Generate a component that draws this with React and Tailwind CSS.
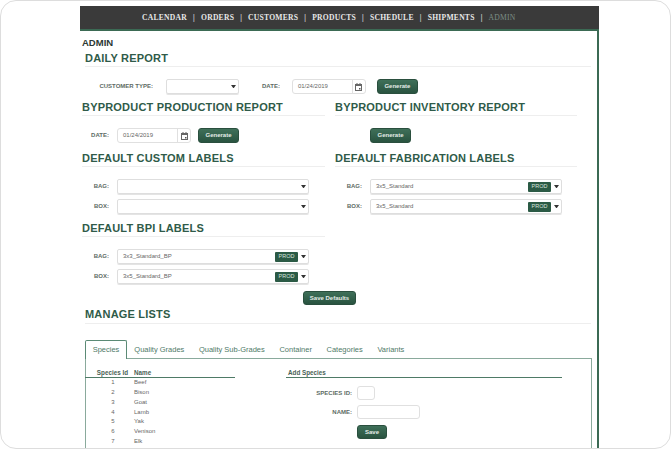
import React from 'react';

const navItems = ['CALENDAR', 'ORDERS', 'CUSTOMERS', 'PRODUCTS', 'SCHEDULE', 'SHIPMENTS'];
const tabs = ['Quality Grades', 'Quality Sub-Grades', 'Container', 'Categories', 'Variants'];
const species = ['Beef', 'Bison', 'Goat', 'Lamb', 'Yak', 'Venison', 'Elk'];

const Caret = () => (
  <svg width="5" height="3.5" viewBox="0 0 6 4" className="shrink-0">
    <polygon points="0,0 6,0 3,4" fill="#333" />
  </svg>
);

const CalendarIcon = () => (
  <svg width="7" height="8" viewBox="0 0 7 8" className="shrink-0">
    <rect x="0.5" y="1.5" width="6" height="6" fill="none" stroke="#666" />
    <rect x="0.5" y="1.5" width="6" height="1.5" fill="#666" />
    <rect x="1.5" y="0" width="1" height="2" fill="#666" />
    <rect x="4.5" y="0" width="1" height="2" fill="#666" />
    <rect x="4" y="5" width="1.5" height="1.5" fill="#555" />
  </svg>
);

const Title = ({ children, className = '' }) => (
  <h2 className={`h-[17px] border-b border-[#eeeeee] text-[11px] leading-[16px] font-bold tracking-[0.2px] text-[#2f5b49] ${className}`}>
    {children}
  </h2>
);

const Label = ({ children, className = '' }) => (
  <span className={`text-[6px] font-bold whitespace-nowrap text-[#5d6b64] ${className}`}>{children}</span>
);

const Button = ({ children, className = '' }) => (
  <button className={`flex items-center justify-center rounded-[3px] border border-[#2a4f3e] bg-gradient-to-b from-[#3f7059] to-[#295340] text-[6px] font-bold whitespace-nowrap text-[#e4ece8] ${className}`}>
    {children}
  </button>
);

const DateInput = ({ className = '' }) => (
  <div className={`flex h-[15px] w-[74px] items-center rounded-[3px] border border-[#e0e0e0] ${className}`}>
    <span className="flex-1 pl-[5px] text-[6px] text-[#666]">01/24/2019</span>
    <span className="flex h-full w-[13px] items-center justify-center border-l border-[#e0e0e0]">
      <CalendarIcon />
    </span>
  </div>
);

const Select = ({ value, prod, className = '' }) => (
  <div className={`flex h-[15px] items-center rounded-[2px] border border-[#dedede] pr-[2px] shadow-[0_1px_0_#e4e4e4] ${className}`}>
    <span className="flex-1 pl-[5px] text-[6px] text-[#666]">{value}</span>
    {prod && (
      <span className="mr-[3px] flex h-[10px] w-[23px] items-center justify-center rounded-[1px] bg-[#2b5a45] text-[5.5px] text-[#d8e4de]">
        PROD
      </span>
    )}
    <Caret />
  </div>
);

const LabelRow = ({ label, value, prod, className = '' }) => (
  <div className={`flex items-center ${className}`}>
    <Label className="w-[27px] text-right">{label}</Label>
    <Select value={value} prod={prod} className="ml-[8px] w-[192px]" />
  </div>
);

const App = () => {
  return (
    <div className="h-[450px] w-[671px] overflow-hidden bg-white font-['Liberation_Sans',sans-serif]">
      <div className="h-[449px] overflow-hidden rounded-[16px] border border-[#dddddd] pl-[79px]">
        <div className="mt-[5px] h-[450px] w-[519px] border-r-2 border-[#3b6a54]">
          <nav className="-mr-[2px] flex h-[25px] items-center gap-[6px] border-b-2 border-[#3b6a54] bg-[#3a3a3a] pl-[62px] font-['Liberation_Serif',serif] text-[7.6px] font-bold tracking-[0.25px] text-[#e8e8e8]">
            {navItems.map((item) => (
              <React.Fragment key={item}>
                <span>{item}</span>
                <span>|</span>
              </React.Fragment>
            ))}
            <span className="font-normal text-[#7c8f85]">ADMIN</span>
          </nav>

          <div className="pl-[2px]">
            <div className="mt-[6px] h-[12px] text-[9.5px] leading-[12px] font-bold text-[#2b3833]">ADMIN</div>

            <Title className="mt-[1px] ml-[3px] w-[506px]">DAILY REPORT</Title>
            <div className="mt-[12px] flex items-center">
              <Label className="w-[71px] text-right">CUSTOMER TYPE:</Label>
              <Select className="ml-[13px] w-[73px]" />
              <Label className="ml-[23px]">DATE:</Label>
              <DateInput className="ml-[12px]" />
              <Button className="ml-[11px] h-[15px] w-[41px]">Generate</Button>
            </div>

            <div className="mt-[5px] grid grid-cols-[243px_242px] gap-x-[10px]">
              <div>
                <Title>BYPRODUCT PRODUCTION REPORT</Title>
                <div className="mt-[12px] flex items-center">
                  <Label className="w-[27px] text-right">DATE:</Label>
                  <DateInput className="ml-[8px]" />
                  <Button className="ml-[7px] h-[15px] w-[41px]">Generate</Button>
                </div>
              </div>
              <div>
                <Title>BYPRODUCT INVENTORY REPORT</Title>
                <Button className="mt-[12px] ml-[35px] h-[15px] w-[41px]">Generate</Button>
              </div>

              <div className="mt-[7px]">
                <Title>DEFAULT CUSTOM LABELS</Title>
                <LabelRow label="BAG:" className="mt-[12px]" />
                <LabelRow label="BOX:" className="mt-[5px]" />
              </div>
              <div className="mt-[7px]">
                <Title>DEFAULT FABRICATION LABELS</Title>
                <LabelRow label="BAG:" value="3x5_Standard" prod className="mt-[12px]" />
                <LabelRow label="BOX:" value="3x5_Standard" prod className="mt-[5px]" />
              </div>

              <div className="mt-[6px]">
                <Title>DEFAULT BPI LABELS</Title>
                <LabelRow label="BAG:" value="3x3_Standard_BP" prod className="mt-[12px]" />
                <LabelRow label="BOX:" value="3x5_Standard_BP" prod className="mt-[5px]" />
              </div>
            </div>

            <Button className="mt-[7px] ml-[221px] h-[14px] w-[53px]">Save Defaults</Button>

            <Title className="mt-[2px] ml-[3px] w-[506px]">
              <span className="block -translate-y-px">MANAGE LISTS</span>
            </Title>

            <div className="mt-[16px] ml-[3px] flex h-[19px] items-end text-[7.5px] text-[#4f7a68]">
              <span className="relative z-10 flex h-[19px] w-[42px] items-center justify-center rounded-t-[2px] border border-b-0 border-[#5b8a75] bg-white">
                Species
              </span>
              {tabs.map((tab) => (
                <span key={tab} className="flex h-[18px] items-center px-[7.3px] whitespace-nowrap">{tab}</span>
              ))}
            </div>

            <div className="-mt-px ml-[3px] flex h-[100px] w-[507px] border border-[#8aaa9c] pt-[9px]">
              <div className="-ml-px w-[150px]">
                <div className="flex h-[10px] items-center border-b border-[#4e7a66] text-[6.3px] font-bold whitespace-nowrap text-[#4a5f55]">
                  <span className="w-[46px] pr-[3px] text-right">Species Id</span>
                  <span className="pl-[3px]">Name</span>
                </div>
                {species.map((name, i) => (
                  <div key={name} className="flex h-[9.75px] items-center text-[6px] text-[#666]">
                    <span className="w-[46px] pr-[3px] pl-[13px] text-center">{i + 1}</span>
                    <span className="pl-[3px]">{name}</span>
                  </div>
                ))}
              </div>

              <div className="ml-[51px] w-[276px]">
                <div className="flex h-[10px] items-center border-b border-[#4e7a66] pl-[2px] text-[6.3px] font-bold text-[#4a5f55]">
                  Add Species
                </div>
                <div className="mt-[8px] flex items-center">
                  <Label className="w-[66px] text-right">SPECIES ID:</Label>
                  <div className="ml-[5px] h-[14px] w-[18px] rounded-[3px] border border-[#e0e0e0]" />
                </div>
                <div className="mt-[5px] flex items-center">
                  <Label className="w-[66px] text-right">NAME:</Label>
                  <div className="ml-[5px] h-[14px] w-[63px] rounded-[3px] border border-[#e0e0e0]" />
                </div>
                <Button className="mt-[6px] ml-[71px] h-[14px] w-[30px]">Save</Button>
              </div>
            </div>
          </div>
        </div>
      </div>
    </div>
  );
};

export default App;
